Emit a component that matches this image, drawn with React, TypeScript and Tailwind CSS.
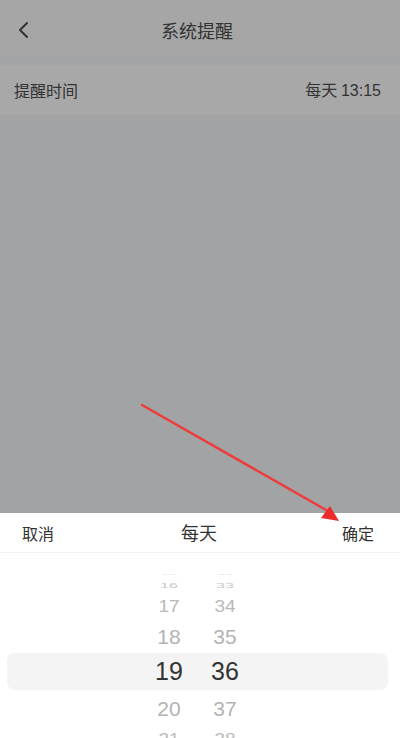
import React from 'react'

//////////
//■[ ピッカー行データ ]
const rows = [
    { h: '15', m: '32', height: 'h-[8px]', text: 'text-[14px] text-[#e6e6e6] scale-y-[0.15]' },
    { h: '16', m: '33', height: 'h-[15px]', text: 'text-[16px] text-[#c8c8c8] scale-y-[0.45]' },
    { h: '17', m: '34', height: 'h-[27px]', text: 'text-[19px] text-[#b8b8b8] scale-y-[0.85]' },
    { h: '18', m: '35', height: 'h-[33px]', text: 'text-[21px] text-[#b3b3b3]' },
    { h: '19', m: '36', height: 'h-[37px]', text: 'text-[25px] text-[#333333]', selected: true },
    { h: '20', m: '37', height: 'h-[36px]', text: 'text-[21px] text-[#b3b3b3]' },
    { h: '21', m: '38', height: 'h-[26px]', text: 'text-[19px] text-[#bbbbbb] scale-y-[0.85]' },
]

export default function App() {
    return (
        <div className="relative w-[400px] h-[738px] overflow-hidden bg-[#a2a3a5] font-['Noto_Sans_CJK_SC','Noto_Sans',sans-serif]">

            {/* ヘッダー */}
            <div className="h-[56px] bg-[#a6a6a6] flex items-center relative">
                <svg className="absolute left-[16px] top-[20px] w-[16px] h-[20px]" viewBox="0 0 16 20" fill="none" stroke="#333333" strokeWidth={2} strokeLinecap="round" strokeLinejoin="round">
                    <path d="M11 3L4 10l7 7" />
                </svg>
                <div className="w-full text-center text-[18px] text-[#333333] pt-[4px] pr-[6px]">系统提醒</div>
            </div>

            {/* 区切り */}
            <div className="h-[9px] bg-[#a3a4a6]" />

            {/* 提醒时间 */}
            <div className="h-[50px] bg-[#a8a8a8] flex items-center justify-between px-[14px] text-[16px] text-[#333333]">
                <span>提醒时间</span>
                <span className="pr-[5px]">每天 <span className="font-['Liberation_Sans',sans-serif]">13:15</span></span>
            </div>

            <div className="h-[398px]" />

            {/* ボトムシート */}
            <div className="bg-white h-[225px]">
                <div className="h-[40px] flex items-center justify-between px-[22px] border-b border-[#f1f1f1] text-[16px] text-[#333333]">
                    <span>取消</span>
                    <span className="text-[18px] pl-[2px]">每天</span>
                    <span className="pr-[4px]">确定</span>
                </div>

                <div className="pt-[17px] font-['Liberation_Sans',sans-serif]">
                    {rows.map((r) => (
                        <div
                            key={r.h}
                            className={`${r.height} flex items-center overflow-hidden ${r.selected ? 'ml-[7px] mr-[12px] bg-[#f4f4f4] rounded-[8px] pl-[142px]' : 'pl-[149px]'}`}
                        >
                            <span className={`w-[40px] text-center leading-none ${r.text}`}>{r.h}</span>
                            <span className={`w-[40px] ml-[16px] text-center leading-none ${r.text}`}>{r.m}</span>
                        </div>
                    ))}
                </div>
            </div>

            {/* 赤い矢印 */}
            <svg className="absolute left-0 top-0 w-[400px] h-[738px] pointer-events-none" viewBox="0 0 400 738">
                <line x1="142" y1="405" x2="328" y2="511" stroke="#ee3b3b" strokeWidth="2.5" strokeLinecap="round" />
                <polygon points="339,521 321,518 330,506" fill="#ee2b2b" />
            </svg>
        </div>
    )
}
